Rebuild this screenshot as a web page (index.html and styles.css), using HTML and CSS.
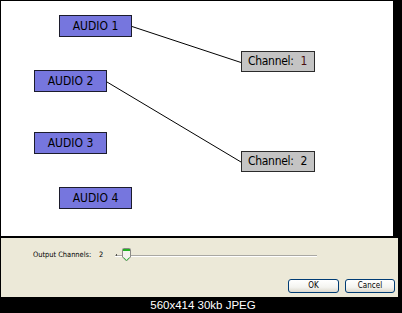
FILE: index.html
```html
<!DOCTYPE html>
<html>
<head>
<meta charset="utf-8">
<link rel="stylesheet" href="styles.css">
</head>
<body>
<div class="frame">
  <div class="canvas">
    <svg class="wires" width="392" height="235" viewBox="0 0 392 235">
      <line x1="131" y1="25.5" x2="240" y2="61.5" stroke="#000" stroke-width="1"/>
      <line x1="106" y1="81" x2="240" y2="161" stroke="#000" stroke-width="1"/>
    </svg>
    <div class="node audio" style="left:58px;top:14px">AUDIO 1</div>
    <div class="node audio" style="left:33px;top:69px">AUDIO 2</div>
    <div class="node audio" style="left:33px;top:131px">AUDIO 3</div>
    <div class="node audio" style="left:58px;top:186px">AUDIO 4</div>
    <div class="node channel" style="left:240px;top:50px">Channel:<span class="num sel">1</span></div>
    <div class="node channel" style="left:240px;top:150px">Channel:<span class="num">2</span></div>
  </div>
  <div class="panel">
    <div class="row">
      <span class="label">Output Channels:</span>
      <span class="value">2</span>
      <div class="slider">
        <div class="tick"></div>
        <div class="track"></div>
        <svg class="thumb" width="9" height="14" viewBox="0 0 9 14">
          <path d="M0.5 1.5 Q0.5 0.5 1.5 0.5 H7.5 Q8.5 0.5 8.5 1.5 V9 L4.5 13 L0.5 9 Z" fill="#F4F3EE" stroke="#8A8A86"/>
          <rect x="1" y="1" width="7" height="2" fill="#22B022"/>
          <path d="M1.5 9.5 L4.5 12.3 L7.5 9.5" fill="none" stroke="#3CBF3C" stroke-width="1"/>
        </svg>
      </div>
    </div>
    <div class="buttons">
      <button class="btn ok">OK</button>
      <button class="btn cancel">Cancel</button>
    </div>
  </div>
  <div class="info">560x414 30kb JPEG</div>
</div>
</body>
</html>
```

FILE: styles.css
```css
html, body {
  margin: 0;
  padding: 0;
  background: #000;
}
.frame {
  width: 402px;
  height: 313px;
  display: flex;
  flex-direction: column;
  background: #000;
}
.canvas {
  position: relative;
  width: 392px;
  height: 235px;
  margin: 1px 0 0 1px;
  background: #fff;
  border-bottom: 2px solid #000;
}
.wires {
  position: absolute;
  left: 0;
  top: 0;
}
.node {
  position: absolute;
  box-sizing: border-box;
  height: 22px;
  border: 1px solid #1c1c2c;
  font-family: "DejaVu Sans Condensed", "DejaVu Sans", sans-serif;
  font-stretch: condensed;
  font-size: 12px;
  line-height: 20px;
  color: #000;
  white-space: pre;
}
.audio {
  width: 73px;
  background: #7676DE;
  text-align: center;
}
.channel {
  width: 74px;
  height: 21px;
  line-height: 19px;
  background: #C4C4C4;
  padding-left: 6px;
  border-color: #2a2a2a;
  letter-spacing: -0.3px;
}
.num {
  margin-left: 7px;
}
.sel {
  color: #4a1010;
}
.panel {
  width: 397px;
  height: 59px;
  margin-left: 1px;
  background: #ECE9D8;
  display: flex;
  flex-direction: column;
}
.row {
  display: flex;
  align-items: center;
  height: 13px;
  margin-top: 10px;
  padding-left: 32px;
  font-family: "DejaVu Sans Condensed", "DejaVu Sans", sans-serif;
  font-stretch: condensed;
  font-size: 7.4px;
  color: #000;
}
.label {
  width: 66px;
  white-space: nowrap;
}
.value {
  width: 5px;
}
.slider {
  position: relative;
  margin-left: 11px;
  width: 202px;
  height: 13px;
  display: flex;
  align-items: center;
}
.track {
  width: 202px;
  height: 1px;
  background: #A9A8A3;
  border-bottom: 1px solid #fff;
  margin-top: 2px;
}
.tick {
  position: absolute;
  left: 1px;
  top: 6px;
  width: 1px;
  height: 2px;
  background: #55554f;
}
.thumb {
  position: absolute;
  left: 7px;
  top: 0;
}
.buttons {
  display: flex;
  justify-content: flex-end;
  gap: 6px;
  margin-top: 18px;
  padding-right: 3px;
}
.btn {
  box-sizing: border-box;
  height: 14px;
  margin: 0;
  padding: 0;
  border: 1px solid #003C74;
  border-radius: 3px;
  background: linear-gradient(#FFFFFF, #F4F4F0 60%, #DCD8CC);
  font-family: "DejaVu Sans Condensed", "DejaVu Sans", sans-serif;
  font-stretch: condensed;
  font-size: 8px;
  line-height: 12px;
  color: #000;
}
.ok {
  width: 51px;
}
.cancel {
  width: 50px;
}
.info {
  height: 16px;
  display: flex;
  align-items: center;
  justify-content: center;
  padding-left: 4px;
  font-family: "Liberation Sans", Arial, sans-serif;
  font-size: 11.5px;
  color: #fff;
}
```
